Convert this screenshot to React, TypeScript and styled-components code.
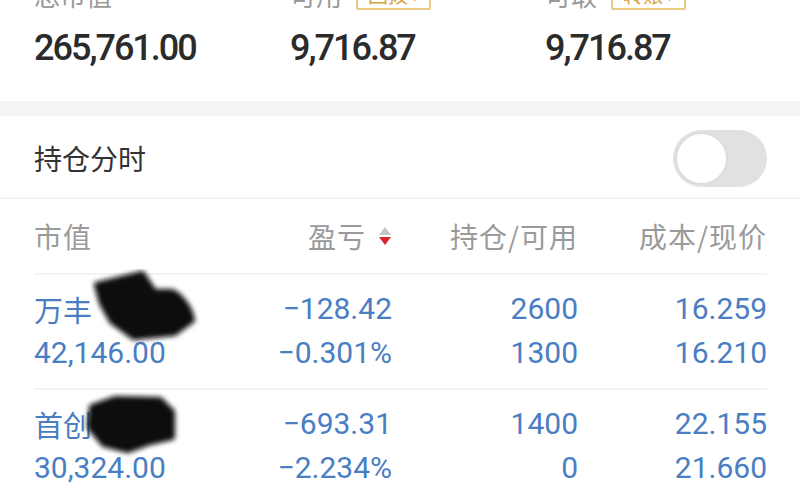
import React from "react";
import styled, { createGlobalStyle } from "styled-components";

const Global = createGlobalStyle`
  html, body { margin: 0; padding: 0; background: #fff; overflow: hidden; }
  body { font-family: Roboto, "Noto Sans CJK SC", sans-serif; }
`;

const Page = styled.div`
  width: 800px;
  height: 500px;
  overflow: hidden;
  background: #fff;
  display: flex;
  flex-direction: column;
`;

const Summary = styled.section`
  display: grid;
  grid-template-columns: 256px 255px 1fr;
  padding: 0 33px 0 34px;
  height: 122px;
  flex-shrink: 0;
  margin-top: -21px;
`;

const SumCol = styled.div`
  display: flex;
  flex-direction: column;
`;

const SumLabelRow = styled.div`
  display: flex;
  align-items: center;
  gap: 14px;
  height: 30px;
  font-family: "Noto Sans CJK SC", sans-serif;
  font-size: 26px;
  color: #9a9a9a;
`;

const Badge = styled.span`
  font-size: 20px;
  line-height: 26px;
  padding: 0 10px;
  color: #d8a43e;
  border: 2px solid #ecc983;
  border-radius: 2px;
  margin-top: 2px;
`;

const SumValue = styled.div`
  margin-top: 17px;
  font-family: Roboto, sans-serif;
  font-weight: 500;
  font-size: 36px;
  line-height: 44px;
  letter-spacing: -2px;
  color: #2b2b2b;
`;

const Band = styled.div`
  height: 15px;
  flex-shrink: 0;
  background: #f4f4f4;
`;

const SwitchRow = styled.div`
  height: 81px;
  flex-shrink: 0;
  display: flex;
  align-items: center;
  justify-content: space-between;
  padding: 0 33px 0 34px;
  border-bottom: 2px solid #f2f2f2;
`;

const SwitchLabel = styled.span`
  font-family: "Noto Sans CJK SC", sans-serif;
  font-size: 28px;
  color: #333;
  margin-top: 2px;
`;

const Toggle = styled.div`
  width: 94px;
  height: 57px;
  margin-top: 3px;
  border-radius: 29px;
  background: #e1e1e1;
  box-sizing: border-box;
  padding: 2px;
  display: flex;
  align-items: center;
`;

const Knob = styled.div`
  width: 53px;
  height: 53px;
  border-radius: 50%;
  background: #fff;
  box-sizing: border-box;
  border: 2px solid #dcdcdc;
`;

const Table = styled.div`
  padding: 0 33px 0 34px;
  display: flex;
  flex-direction: column;
`;

const Grid = styled.div<{ $head?: boolean }>`
  display: grid;
  grid-template-columns: 198px 160px 186px 189px;
  height: ${(p) => (p.$head ? "74px" : "auto")};
  flex-shrink: 0;
  align-items: center;
  border-bottom: 2px solid #f3f3f3;
  padding: ${(p) => (p.$head ? "0" : "12px 0 13px")};
  position: relative;
`;

const HeadCell = styled.div<{ $right?: boolean }>`
  font-family: "Noto Sans CJK SC", sans-serif;
  font-size: 28px;
  color: #9a9a9a;
  display: flex;
  align-items: center;
  justify-content: ${(p) => (p.$right ? "flex-end" : "flex-start")};
  letter-spacing: 1px;
`;

const Cell = styled.div<{ $right?: boolean }>`
  display: flex;
  flex-direction: column;
  align-items: ${(p) => (p.$right ? "flex-end" : "flex-start")};
  color: #4a7ec3;
  font-family: Roboto, "Noto Sans CJK SC", sans-serif;
  font-size: 30px;
  line-height: 44px;
`;

const Name = styled.span`
  font-family: "Noto Sans CJK SC", sans-serif;
  font-size: 29px;
`;

const SortIcon = styled.svg`
  margin-left: 12px;
  width: 14px;
  height: 22px;
`;

const Redact = styled.svg`
  position: absolute;
  pointer-events: none;
`;

const rows = [
  {
    name: "万丰",
    mv: "42,146.00",
    pnl: "−128.42",
    pct: "−0.301%",
    qty: "2600",
    avail: "1300",
    cost: "16.259",
    price: "16.210",
    blob: "M7 16 L52 5 L64 23 L82 23 C92 28 100 40 102 51 L84 64 L44 68 L22 52 L12 34 Z",
    left: 56,
    top: -6,
  },
  {
    name: "首创",
    mv: "30,324.00",
    pnl: "−693.31",
    pct: "−2.234%",
    qty: "1400",
    avail: "0",
    cost: "22.155",
    price: "21.660",
    blob: "M12 15 L35 7 L80 8 L92 20 L92 45 L70 50 L48 58 L24 52 L10 35 Z",
    left: 46,
    top: 2,
  },
];

export default function App() {
  return (
    <Page>
      <Global />
      <Summary>
        <SumCol>
          <SumLabelRow>总市值</SumLabelRow>
          <SumValue>265,761.00</SumValue>
        </SumCol>
        <SumCol>
          <SumLabelRow>
            可用<Badge>回拨 ›</Badge>
          </SumLabelRow>
          <SumValue>9,716.87</SumValue>
        </SumCol>
        <SumCol>
          <SumLabelRow>
            可取<Badge>转账 ›</Badge>
          </SumLabelRow>
          <SumValue>9,716.87</SumValue>
        </SumCol>
      </Summary>
      <Band />
      <SwitchRow>
        <SwitchLabel>持仓分时</SwitchLabel>
        <Toggle>
          <Knob />
        </Toggle>
      </SwitchRow>
      <Table>
        <Grid $head>
          <HeadCell>市值</HeadCell>
          <HeadCell $right>
            盈亏
            <SortIcon viewBox="0 0 14 22">
              <polygon points="7,2 13,10 1,10" fill="#c4c4c4" />
              <polygon points="1,12 13,12 7,20" fill="#d7262e" />
            </SortIcon>
          </HeadCell>
          <HeadCell $right>持仓/可用</HeadCell>
          <HeadCell $right>成本/现价</HeadCell>
        </Grid>
        {rows.map((r, i) => (
          <Grid key={r.name}>
            <Cell>
              <Name>{r.name}</Name>
              <span>{r.mv}</span>
            </Cell>
            <Cell $right>
              <span>{r.pnl}</span>
              <span>{r.pct}</span>
            </Cell>
            <Cell $right>
              <span>{r.qty}</span>
              <span>{r.avail}</span>
            </Cell>
            <Cell $right>
              <span>{r.cost}</span>
              <span>{r.price}</span>
            </Cell>
            <Redact
              width="120"
              height="75"
              viewBox="0 0 120 75"
              style={{ left: r.left, top: r.top }}
            >
              <defs>
                <filter id={`blur${i}`} x="-20%" y="-20%" width="140%" height="140%">
                  <feGaussianBlur stdDeviation="2.5" />
                </filter>
              </defs>
              <path
                d={r.blob}
                fill="#0a0a0a"
                stroke="#0a0a0a"
                strokeWidth="6"
                strokeLinejoin="round"
                filter={`url(#blur${i})`}
              />
            </Redact>
          </Grid>
        ))}
      </Table>
    </Page>
  );
}
